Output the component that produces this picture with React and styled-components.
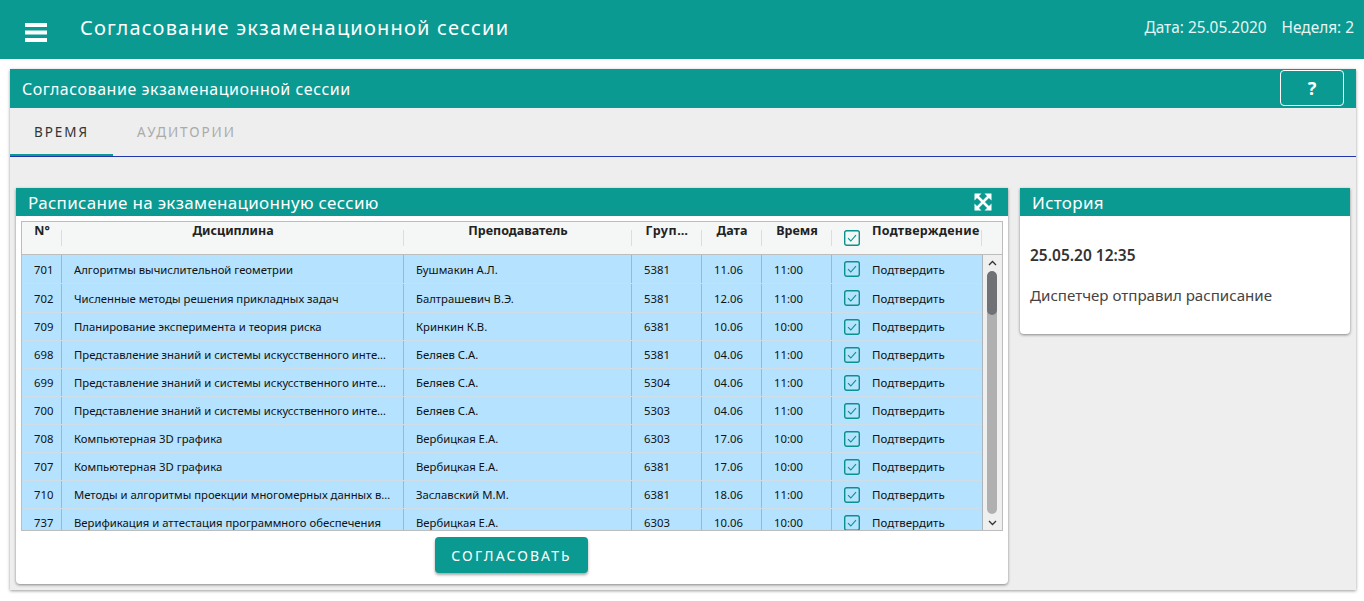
import React from "react";
import styled, { createGlobalStyle } from "styled-components";

const TEAL = "#0a9a92";
const FONT = `"Noto Sans", "Open Sans", sans-serif`;

const Global = createGlobalStyle`
  html, body { margin: 0; padding: 0; background: #fff; height: 601px; overflow: hidden; }
  body { font-family: ${FONT}; color: #333; }
  * { box-sizing: border-box; }
`;

const Page = styled.div`
  width: 1364px;
  height: 601px;
  display: flex;
  flex-direction: column;
  overflow: hidden;
`;
const TopBar = styled.header`
  height: 59px;
  background: ${TEAL};
  color: #fff;
  display: flex;
  align-items: center;
  padding: 0 10px 4px 25px;
  flex: none;
`;
const Burger = styled.svg`
  width: 22px;
  height: 20px;
  margin-top: 8px;
  flex: none;
`;
const AppTitle = styled.h1`
  margin: 0 0 0 33px;
  font-size: 20px;
  font-weight: 400;
  letter-spacing: 1.2px;
  flex: 1;
`;
const Meta = styled.span`
  font-size: 15.4px;
  margin-left: 15px;
  color: #e6f5f4;
`;
const Panel = styled.main`
  margin: 10px 8px 0 10px;
  height: 521px;
  background: #eee;
  box-shadow: 0 1px 3px rgba(0, 0, 0, 0.4);
  display: flex;
  flex-direction: column;
`;
const PanelHead = styled.div`
  height: 39px;
  background: ${TEAL};
  color: #fff;
  display: flex;
  align-items: center;
  justify-content: space-between;
  padding: 0 12px;
  font-size: 16px;
  letter-spacing: 0.54px;
  flex: none;
`;
const HelpButton = styled.button`
  width: 64px;
  height: 36px;
  margin-top: -1px;
  background: transparent;
  border: 1px solid #fff;
  border-radius: 4px;
  color: #fff;
  font: 700 18px ${FONT};
`;
const Tabs = styled.nav`
  height: 49px;
  display: flex;
  border-bottom: 1px solid #2236ab;
  flex: none;
`;
const Tab = styled.div`
  width: ${(p) => p.$w}px;
  height: 48px;
  padding-top: 15px;
  text-align: center;
  font-size: 13.5px;
  font-weight: 400;
  letter-spacing: 1.95px;
  color: ${(p) => (p.$active ? "#333" : "#aaa")};
  border-bottom: ${(p) => (p.$active ? `2px solid ${TEAL}` : "none")};
`;
const Columns = styled.div`
  display: flex;
  align-items: flex-start;
  gap: 12px;
  padding: 31px 6px 0;
`;
const Card = styled.section`
  width: ${(p) => p.$w}px;
  background: #fff;
  border-radius: 0 0 4px 4px;
  box-shadow: 0 1px 3px rgba(0, 0, 0, 0.45);
`;
const CardHead = styled.div`
  height: 28px;
  background: ${TEAL};
  color: #fff;
  font-size: 17px;
  padding: 0 12px;
  display: flex;
  align-items: center;
  justify-content: space-between;
  letter-spacing: 0.3px;
`;
const Expand = styled.svg`
  width: 18px;
  height: 18px;
  margin-right: 4px;
`;
const CardBody = styled.div`
  padding: 5px 5px 11px;
  display: flex;
  flex-direction: column;
  align-items: center;
`;
const Table = styled.div`
  width: 982px;
  height: 310px;
  border: 1px solid #bdbdbd;
  position: relative;
  overflow: hidden;
  font-size: 11.3px;
  color: #111;
`;
const cols = "40px 342px 228px 70px 60px 70px 150px 20px";
const HeadRow = styled.div`
  display: grid;
  grid-template-columns: ${cols};
  height: 33px;
  background: #f5f7f6;
  border-bottom: 1px solid #bdbdbd;
`;
const HeadCell = styled.div`
  position: relative;
  font-weight: 700;
  font-size: 12.5px;
  text-align: center;
  padding: 0;
  color: #222;
  white-space: nowrap;
  overflow: hidden;
  letter-spacing: ${(p) => p.$track || 0}px;
  &::after {
    content: "";
    position: absolute;
    right: 0;
    top: 8px;
    height: 16px;
    width: 1px;
    background: #ddd;
  }
`;
const HeadCheck = styled(HeadCell)`
  display: flex;
  padding-left: 12px;
  gap: 12px;
  text-align: left;
`;
const HeadCheckLabel = styled.span`
  letter-spacing: 0.3px;
`;
const Row = styled.div`
  display: grid;
  grid-template-columns: ${cols};
  height: 28px;
  background: #b5e2fe;
  border-bottom: 1px solid #cfdde6;
  &:nth-child(-n + 2) { height: 29px; }
`;
const Cell = styled.div`
  display: flex;
  align-items: center;
  padding: 0 12px;
  border-right: ${(p) => (p.$last ? "none" : "1px solid #a9b4bb")};
  white-space: nowrap;
  overflow: hidden;
  ${(p) => (p.$check ? "gap: 12px;" : "")}
`;
const Clip = styled.span`
  overflow: hidden;
  text-overflow: ellipsis;
`;
const Action = styled.span`
  font-size: 11.5px;
`;
const Check = styled.svg`
  width: 16px;
  height: 16px;
  flex: none;
  margin-top: ${(p) => p.$top || 0}px;
`;
const Scroll = styled.div`
  position: absolute;
  right: 0;
  top: 33px;
  bottom: 0;
  width: 20px;
  background: #efefef;
  border-left: 1px solid #a9b4bb;
  display: flex;
  flex-direction: column;
  align-items: center;
`;
const Arrow = styled.svg`
  width: 9px;
  height: 6px;
  flex: none;
`;
const Track = styled.div`
  position: absolute;
  left: 4px;
  top: 16px;
  width: 10px;
  height: 243px;
  border-radius: 5px;
  background: #b0b0b0;
  overflow: hidden;
`;
const Thumb = styled.div`
  width: 10px;
  height: 44px;
  border-radius: 5px;
  background: #6f7175;
`;
const ArrowUp = styled(Arrow)`
  margin-top: 5px;
`;
const ArrowDown = styled(Arrow)`
  margin-top: auto;
  margin-bottom: 4px;
`;
const Approve = styled.button`
  margin: 6px 1px 0 0;
  width: 153px;
  height: 36px;
  border: none;
  border-radius: 4px;
  background: ${TEAL};
  color: #fff;
  font: 400 14px ${FONT};
  letter-spacing: 2.1px;
  box-shadow: 0 2px 3px rgba(0, 0, 0, 0.35);
`;
const HistoryBody = styled.div`
  height: 118px;
  padding: 28px 10px 0;
`;
const Stamp = styled.div`
  font-size: 15.5px;
  font-weight: 600;
  color: #333;
`;
const Note = styled.div`
  font-size: 15.1px;
  margin-top: 19px;
  color: #444;
`;

const CheckIcon = ({ top }) => (
  <Check viewBox="0 0 16 16" $top={top}>
    <rect x="0.7" y="0.7" width="14.6" height="14.6" rx="2" fill="none" stroke="#0a918a" strokeWidth="1.4" />
    <path d="M4 8.2l2.8 2.8L12 5.2" fill="none" stroke="#0a918a" strokeWidth="1.1" />
  </Check>
);

const rows = [
  ["701", "Алгоритмы вычислительной геометрии", "Бушмакин А.Л.", "5381", "11.06", "11:00"],
  ["702", "Численные методы решения прикладных задач", "Балтрашевич В.Э.", "5381", "12.06", "11:00"],
  ["709", "Планирование эксперимента и теория риска", "Кринкин К.В.", "6381", "10.06", "10:00"],
  ["698", "Представление знаний и системы искусственного интеллекта", "Беляев С.А.", "5381", "04.06", "11:00"],
  ["699", "Представление знаний и системы искусственного интеллекта", "Беляев С.А.", "5304", "04.06", "11:00"],
  ["700", "Представление знаний и системы искусственного интеллекта", "Беляев С.А.", "5303", "04.06", "11:00"],
  ["708", "Компьютерная 3D графика", "Вербицкая Е.А.", "6303", "17.06", "10:00"],
  ["707", "Компьютерная 3D графика", "Вербицкая Е.А.", "6381", "17.06", "10:00"],
  ["710", "Методы и алгоритмы проекции многомерных данных в виде графиков", "Заславский М.М.", "6381", "18.06", "11:00"],
  ["737", "Верификация и аттестация программного обеспечения", "Вербицкая Е.А.", "6303", "10.06", "10:00"],
];

export default function App() {
  return (
    <Page>
      <Global />
      <TopBar>
        <Burger viewBox="0 0 22 20">
          <path d="M0 1h22v4H0zM0 8.5h22v4H0zM0 16h22v4H0z" fill="#fff" />
        </Burger>
        <AppTitle>Согласование экзаменационной сессии</AppTitle>
        <Meta>Дата: 25.05.2020</Meta>
        <Meta>Неделя: 2</Meta>
      </TopBar>
      <Panel>
        <PanelHead>
          <span>Согласование экзаменационной сессии</span>
          <HelpButton>?</HelpButton>
        </PanelHead>
        <Tabs>
          <Tab $active $w={103}>ВРЕМЯ</Tab>
          <Tab $w={147}>АУДИТОРИИ</Tab>
        </Tabs>
        <Columns>
          <Card $w={992}>
            <CardHead>
              <span>Расписание на экзаменационную сессию</span>
              <Expand viewBox="0 0 18 18">
                <path d="M0.5 0.5h7L0.5 7.5zM17.5 0.5v7l-7-7zM0.5 17.5v-7l7 7zM17.5 17.5h-7l7-7z" fill="#fff" />
                <path d="M3 3l12 12M15 3L3 15" stroke="#fff" strokeWidth="2.6" fill="none" />
              </Expand>
            </CardHead>
            <CardBody>
              <Table>
                <HeadRow>
                  <HeadCell>N°</HeadCell>
                  <HeadCell>Дисциплина</HeadCell>
                  <HeadCell>Преподаватель</HeadCell>
                  <HeadCell $track={0.6}>Груп…</HeadCell>
                  <HeadCell>Дата</HeadCell>
                  <HeadCell>Время</HeadCell>
                  <HeadCheck>
                    <CheckIcon top={8} />
                    <HeadCheckLabel>Подтверждение</HeadCheckLabel>
                  </HeadCheck>
                  <span />
                </HeadRow>
                <div>
                  {rows.map((r) => (
                    <Row key={r[0]}>
                      <Cell>{r[0]}</Cell>
                      <Cell><Clip>{r[1]}</Clip></Cell>
                      <Cell>{r[2]}</Cell>
                      <Cell>{r[3]}</Cell>
                      <Cell>{r[4]}</Cell>
                      <Cell>{r[5]}</Cell>
                      <Cell $check $last>
                        <CheckIcon />
                        <Action>Подтвердить</Action>
                      </Cell>
                    </Row>
                  ))}
                </div>
                <Scroll>
                  <ArrowUp viewBox="0 0 9 6">
                    <path d="M1 5l3.5-3.5L8 5" fill="none" stroke="#333" strokeWidth="1.3" />
                  </ArrowUp>
                  <Track><Thumb /></Track>
                  <ArrowDown viewBox="0 0 9 6">
                    <path d="M1 1l3.5 3.5L8 1" fill="none" stroke="#333" strokeWidth="1.3" />
                  </ArrowDown>
                </Scroll>
              </Table>
              <Approve>СОГЛАСОВАТЬ</Approve>
            </CardBody>
          </Card>
          <Card $w={330}>
            <CardHead>История</CardHead>
            <HistoryBody>
              <Stamp>25.05.20 12:35</Stamp>
              <Note>Диспетчер отправил расписание</Note>
            </HistoryBody>
          </Card>
        </Columns>
      </Panel>
    </Page>
  );
}
